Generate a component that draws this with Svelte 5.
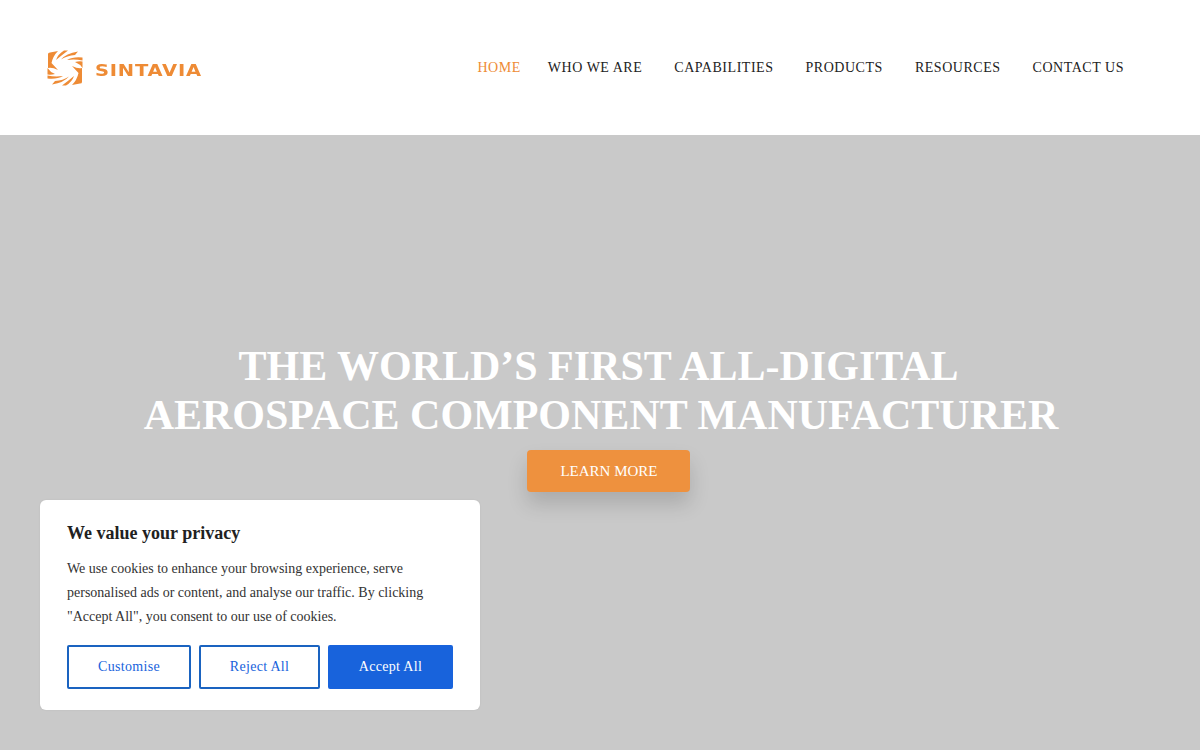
<script>
  const links = ['WHO WE ARE', 'CAPABILITIES', 'PRODUCTS', 'RESOURCES', 'CONTACT US'];
  const petals = [
    'M1 4 Q1 2.5 3 2.5 L11 1 Q6 6 4.5 13 L11 20 Q5 17 1 18 Z',
    'M9 10 Q11 4 17 0.5 L21 0.5 Q15 5 9 10 Z',
    'M14 9.5 Q19 3.5 31 1.5 L28 5 Q20 5.5 14 9.5 Z',
    'M20 10 Q26 6.5 35.5 7.5 L35.5 10.5 Q28 9 20 10 Z',
    'M28 12 Q32 11 35.5 11.5 L35.5 18 Q33 14 28 12 Z'
  ];
</script>

<div class="page">
  <header>
    <a class="logo" href="#top">
      <svg class="mark" width="36" height="36" viewBox="0 0 36 36" aria-hidden="true">
        <g fill="#ee8b35">
          {#each petals as d}
            <path {d} />
          {/each}
          <g transform="rotate(180 18 18)">
            {#each petals as d}
              <path {d} />
            {/each}
          </g>
        </g>
      </svg>
      <span class="wordmark">SINTAVIA</span>
    </a>
    <nav>
      <a class="home" href="#top">HOME</a>
      {#each links as link}
        <a href="#top">{link}</a>
      {/each}
    </nav>
  </header>

  <main class="hero">
    <h1><span class="first">THE WORLD’S FIRST ALL-DIGITAL</span><span>AEROSPACE COMPONENT MANUFACTURER</span></h1>
    <a class="cta" href="#top">LEARN MORE</a>
  </main>

  <aside class="cookie">
    <h2>We value your privacy</h2>
    <p>We use cookies to enhance your browsing experience, serve personalised ads or content, and analyse our traffic. By clicking "Accept All", you consent to our use of cookies.</p>
    <div class="actions">
      <button class="outline custom">Customise</button>
      <button class="outline reject">Reject All</button>
      <button class="solid">Accept All</button>
    </div>
  </aside>
</div>

<style>
  :global(body) {
    margin: 0;
    font-family: "Liberation Serif", serif;
    background: #c9c9c9;
  }
  .page {
    width: 1200px;
    height: 750px;
    position: relative;
    overflow: hidden;
    display: flex;
    flex-direction: column;
  }
  header {
    height: 135px;
    flex: none;
    background: #fff;
    display: flex;
    align-items: center;
    justify-content: space-between;
    padding: 0 76px 0 47px;
  }
  .logo {
    display: flex;
    align-items: center;
    gap: 12px;
    text-decoration: none;
  }
  .mark {
    filter: blur(0.3px);
  }
  .wordmark {
    font-family: "DejaVu Sans", sans-serif;
    font-weight: 700;
    font-size: 15px;
    letter-spacing: 0.6px;
    color: #ee8b35;
    margin-top: 7px;
    transform: scaleX(1.3);
    transform-origin: left center;
    filter: blur(0.3px);
  }
  nav {
    display: flex;
    align-items: center;
    gap: 32px;
    margin-top: 1px;
  }
  nav a {
    font-size: 14px;
    letter-spacing: 0.53px;
    color: #222;
    text-decoration: none;
  }
  nav a.home {
    color: #ee8b35;
    margin-right: -5px;
  }
  .hero {
    flex: 1;
    background: #c9c9c9;
    display: flex;
    flex-direction: column;
    align-items: center;
    padding-top: 206px;
  }
  h1 {
    margin: 0;
    font-size: 42px;
    line-height: 49px;
    font-weight: 700;
    color: #fff;
    text-align: center;
    transform: translate(1px, 1px);
  }
  h1 span {
    display: block;
  }
  h1 .first {
    margin-right: 5px;
  }
  .cta {
    margin-top: 11px;
    margin-left: 17px;
    padding-left: 1px;
    box-sizing: border-box;
    width: 163px;
    height: 42px;
    display: flex;
    align-items: center;
    justify-content: center;
    background: #ee913e;
    color: #fff;
    font-size: 15px;
    border-radius: 4px;
    text-decoration: none;
    box-shadow: 0 12px 20px rgba(0, 0, 0, 0.15);
  }
  .cookie {
    position: absolute;
    left: 40px;
    top: 500px;
    width: 440px;
    height: 210px;
    box-sizing: border-box;
    padding: 22px 27px;
    background: #fff;
    border-radius: 6px;
    box-shadow: 0 0 2px rgba(0, 0, 0, 0.08);
    color: #212121;
  }
  h2 {
    margin: 0;
    font-size: 18px;
    line-height: 22px;
    font-weight: 700;
  }
  p {
    margin: 13px 0 16px;
    font-size: 14px;
    line-height: 24px;
    color: #333;
  }
  .actions {
    display: flex;
    gap: 8px;
  }
  button {
    height: 44px;
    box-sizing: border-box;
    font-family: inherit;
    font-size: 14px;
    letter-spacing: 0.3px;
    border-radius: 2px;
    border: 2px solid #1863dc;
    padding: 0;
  }
  .outline {
    background: #fff;
    color: #1863dc;
  }
  .custom { width: 124px; border-color: #1a63c0; }
  .reject { width: 121px; border-color: #1a63c0; }
  .solid {
    width: 125px;
    background: #1863dc;
    color: #fff;
  }
</style>
